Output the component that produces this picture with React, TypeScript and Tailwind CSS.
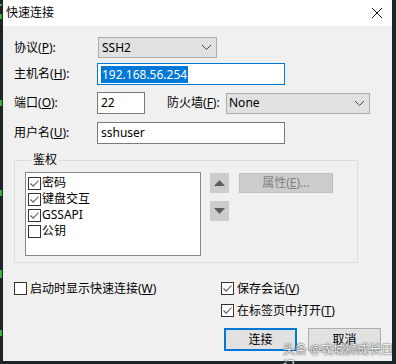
import React from "react";

const F = "font-['Noto_Sans','Noto_Sans_CJK_SC',sans-serif]";

function Check({ checked }: { checked: boolean }) {
  return (
    <span className="w-[13px] h-[13px] border border-[#333333] bg-white flex items-center justify-center shrink-0 box-border">
      {checked && (
        <svg width="11" height="11" viewBox="0 0 11 11">
          <path d="M1.5 5.5 L4.2 8.2 L9.5 2.5" stroke="#5a5a5a" strokeWidth="1.1" fill="none" />
        </svg>
      )}
    </span>
  );
}

function Chevron() {
  return (
    <svg width="11" height="7" viewBox="0 0 11 7">
      <path d="M1 1 L5.5 5.5 L10 1" stroke="#444" strokeWidth="1" fill="none" />
    </svg>
  );
}

function Label({ text, k, className = "" }: { text: string; k: string; className?: string }) {
  return (
    <span className={"text-[12px] leading-[16px] text-[#000] whitespace-nowrap " + className}>
      {text}(<u className="underline-offset-1">{k}</u>):
    </span>
  );
}

export default function App() {
  return (
    <div className={"relative w-[396px] h-[364px] bg-[#1c2526] overflow-hidden flex " + F}>
      {/* green bits in background terminal */}
      <span className="absolute left-0 top-[4px] w-[2px] h-[2px] bg-[#3fae3f]" />
      <span className="absolute left-0 top-[14px] w-[2px] h-[5px] bg-[#3fae3f]" />
      <span className="absolute left-0 top-[100px] w-[2px] h-[6px] bg-[#3fae3f]" />
      <span className="absolute left-0 top-[190px] w-[2px] h-[6px] bg-[#3fae3f]" />
      <span className="absolute left-0 top-[270px] w-[2px] h-[8px] bg-[#3fae3f]" />
      <span className="absolute left-0 top-[330px] w-[2px] h-[6px] bg-[#3fae3f]" />

      <div className="ml-[3px] w-[389px] h-[361px] bg-[#f0f0f0] flex flex-col">
        {/* title bar */}
        <div className="h-[26px] bg-white flex items-center justify-between pl-[3px] pr-[8px]">
          <span className="text-[12px] leading-[16px] text-black">快速连接</span>
          <svg width="12" height="12" viewBox="0 0 12 12" className="mr-[1px]">
            <path d="M1 1 L11 11 M11 1 L1 11" stroke="#111" strokeWidth="1" />
          </svg>
        </div>

        <div className="flex flex-col pl-[11px]">
          {/* row protocol */}
          <div className="mt-[11px] flex items-center h-[21px]">
            <Label text="协议" k="P" className="w-[84px]" />
            <div className="w-[119px] h-[21px] bg-[#e1e1e1] border border-[#adadad] flex items-center justify-between pl-[3px] pr-[4px]">
              <span className="text-[12px] leading-[16px]">SSH2</span>
              <Chevron />
            </div>
          </div>
          {/* host */}
          <div className="mt-[5px] flex items-center h-[22px]">
            <Label text="主机名" k="H" className="w-[83px]" />
            <div className="w-[188px] h-[22px] bg-white border border-[#0078d7] flex items-center pl-[3px]">
              <span className="text-[12px] leading-[17px] bg-[#0078d7] text-white px-[1px]">192.168.56.254</span>
            </div>
          </div>
          {/* port + firewall */}
          <div className="mt-[7px] flex items-center h-[22px]">
            <Label text="端口" k="O" className="w-[83px]" />
            <div className="w-[48px] h-[22px] bg-white border border-[#7a7a7a] flex items-center pl-[3px]">
              <span className="text-[12px] leading-[16px]">22</span>
            </div>
            <Label text="防火墙" k="F" className="ml-[22px] w-[59px]" />
            <div className="w-[144px] h-[21px] bg-[#e1e1e1] border border-[#adadad] flex items-center justify-between pl-[2px] pr-[4px]">
              <span className="text-[12px] leading-[16px]">None</span>
              <Chevron />
            </div>
          </div>
          {/* user */}
          <div className="mt-[8px] flex items-center h-[22px]">
            <Label text="用户名" k="U" className="w-[83px]" />
            <div className="w-[188px] h-[22px] bg-white border border-[#7a7a7a] flex items-center pl-[3px]">
              <span className="text-[12px] leading-[16px]">sshuser</span>
            </div>
          </div>

          {/* auth group */}
          <fieldset className="mt-[8px] w-[344px] border border-[#dcdcdc] pl-[10px] pb-[6px] m-0">
            <legend className="ml-[6px] px-[2px] text-[12px] leading-[16px]">鉴权</legend>
            <div className="mt-[4px] flex items-start">
              <div className="w-[176px] h-[84px] bg-white border border-[#828790] flex flex-col pt-[2px] pl-[2px]">
                {[
                  ["密码", true],
                  ["键盘交互", true],
                  ["GSSAPI", true],
                  ["公钥", false],
                ].map(([t, c]) => (
                  <div key={t as string} className="h-[16px] flex items-center gap-[1px]">
                    <Check checked={c as boolean} />
                    <span className="text-[12px] leading-[16px] text-black">{t as string}</span>
                  </div>
                ))}
              </div>
              <div className="ml-[9px] mt-[1px] flex flex-col gap-[8px]">
                <div className="w-[19px] h-[20px] bg-[#cccccc] flex items-center justify-center">
                  <svg width="11" height="6" viewBox="0 0 11 6"><path d="M0 6 L5.5 0 L11 6 Z" fill="#5d5d5d" /></svg>
                </div>
                <div className="w-[19px] h-[20px] bg-[#cccccc] flex items-center justify-center">
                  <svg width="11" height="6" viewBox="0 0 11 6"><path d="M0 0 L5.5 6 L11 0 Z" fill="#5d5d5d" /></svg>
                </div>
              </div>
              <div className="ml-[10px] mt-[1px] w-[94px] h-[20px] bg-[#cccccc] border border-[#bfbfbf] flex items-center justify-center">
                <span className="text-[12px] leading-[16px] text-[#838383]">
                  属性(<u>E</u>)...
                </span>
              </div>
            </div>
          </fieldset>

          {/* bottom checkboxes */}
          <div className="mt-[19px] flex">
            <div className="w-[207px] flex items-center h-[13px] gap-[3px]">
              <Check checked={false} />
              <span className="text-[12px] leading-[16px]">启动时显示快速连接(<u>W</u>)</span>
            </div>
            <div className="flex flex-col gap-[9px]">
              <div className="flex items-center h-[13px] gap-[3px]">
                <Check checked={true} />
                <span className="text-[12px] leading-[16px]">保存会话(<u>V</u>)</span>
              </div>
              <div className="flex items-center h-[13px] gap-[3px]">
                <Check checked={true} />
                <span className="text-[12px] leading-[16px]">在标签页中打开(<u>T</u>)</span>
              </div>
            </div>
          </div>

          {/* buttons */}
          <div className="mt-[11px] flex justify-end gap-[11px] pr-[11px]">
            <div className="w-[73px] h-[23px] bg-[#e1e1e1] border-2 border-[#0078d7] flex items-center justify-center">
              <span className="text-[12px] leading-[16px]">连接</span>
            </div>
            <div className="w-[73px] h-[23px] bg-[#e1e1e1] border border-[#adadad] flex items-center justify-center">
              <span className="text-[12px] leading-[16px]">取消</span>
            </div>
          </div>
        </div>
      </div>

      {/* watermark */}
      <span className="absolute left-[283px] top-[342px] text-[12px] leading-[16px] text-[#f4f4f4] [text-shadow:0_0_2px_#555,0_0_1px_#333]">
        头条 @攻城狮成长日记
      </span>
    </div>
  );
}
